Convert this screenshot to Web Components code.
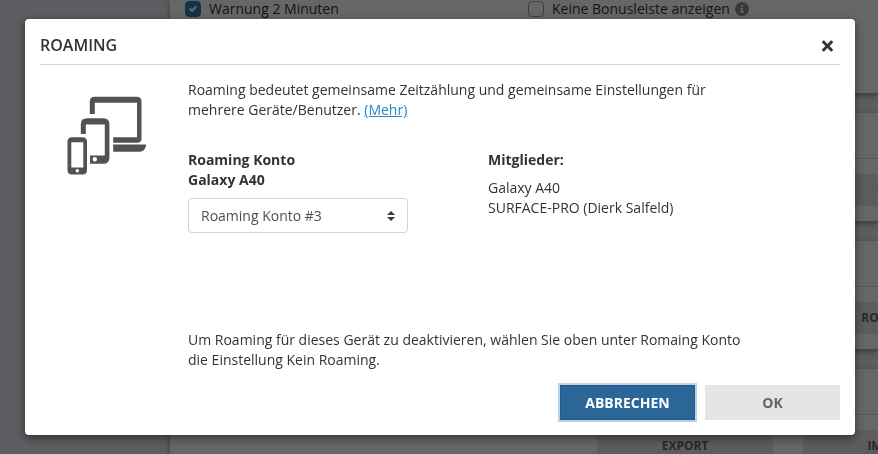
<!DOCTYPE html>
<html lang="de">
<head>
<meta charset="utf-8">
<meta name="viewport" content="width=device-width, initial-scale=1">
<title>Roaming</title>
<style>
	html {
		height: 100%;
		overflow: hidden;
	}

	body {
		margin: 0;
		height: 100%;
		overflow: hidden;
		background: #e6e8f0;
		color: #333;
		font: 14px/20px "Open Sans", "Noto Sans", sans-serif;
	}
</style>
</head>
<body>
<settings-page>
	<settings-card>
		<check-option checked>Warnung 2 Minuten</check-option>
		<check-option info>Keine Bonusleiste anzeigen</check-option>
	</settings-card>
	<settings-card>
		<action-button slot="actions">TEST</action-button>
	</settings-card>
	<settings-card>
		<action-button slot="actions">ROAMING</action-button>
	</settings-card>
	<settings-card>
		<action-button slot="actions">EXPORT</action-button>
		<action-button slot="actions">IMPORT</action-button>
	</settings-card>
</settings-page>

<modal-dialog heading="ROAMING">
	<devices-icon slot="icon"></devices-icon>
	<roaming-form></roaming-form>
	<action-button slot="footer" variant="primary">ABBRECHEN</action-button>
	<action-button slot="footer" variant="muted">OK</action-button>
</modal-dialog>

<script>
class BaseElement extends HTMLElement {
	constructor() {
		super();
		this.attachShadow({ mode: "open" });
	}

	connectedCallback() {
		const template = document.createElement("template");
		template.innerHTML = this.render();
		this.shadowRoot.appendChild(template.content.cloneNode(true));
	}
}

class SettingsPage extends BaseElement {
	render() {
		return `
      <style>
        :host {
          display: flex;
          flex-direction: column;
          gap: 20px;
          padding-left: 170px;
          /* the cards keep room for two columns of buttons */
          min-width: 824px;
        }
      </style>
      <slot></slot>
`;
	}
}

class SettingsCard extends BaseElement {
	render() {
		const actions = this.querySelector("[slot=actions]");

		return `
      <style>
        :host {
          display: block;
          background: #fff;
          box-shadow: 0 2px 6px rgba(0, 0, 0, 0.4);
        }

        .options {
          display: grid;
          grid-template-columns: 343px 1fr;
          padding: 0 15px 75px;
          min-height: 18px;
        }

        .head {
          height: 45px;
          border-bottom: 1px solid #d8d8d8;
        }

        .actions {
          display: flex;
          justify-content: flex-end;
          gap: 30px;
          padding: 15px;
        }
      </style>
      ${actions
				? `<div class="head"></div><div class="actions"><slot name="actions"></slot></div>`
				: `<div class="options"><slot></slot></div>`}
`;
	}
}

class CheckOption extends BaseElement {
	render() {
		const checked = this.hasAttribute("checked") ? "checked" : "";
		const info = `
      <svg class="info" viewBox="0 0 14 14" aria-hidden="true">
        <circle cx="7" cy="7" r="7" fill="#8c8c8c"/>
        <path d="M6 3h2v2H6zM5 6h3v3.500h1V11H5V9.500h1V7H5z" fill="#f0f0f0"/>
      </svg>`;

		return `
      <style>
        :host {
          display: flex;
          align-items: center;
          height: 18px;
        }

        label {
          display: grid;
          grid-template-columns: 16px auto;
          column-gap: 8px;
          align-items: center;
        }

        input,
        .tick {
          grid-area: 1 / 1;
        }

        input {
          appearance: none;
          box-sizing: border-box;
          width: 16px;
          height: 16px;
          margin: 0;
          border: 1px solid #999fa8;
          border-radius: 4px;
          background: #fff;
        }

        input:checked {
          border-color: #2f80bd;
          background: #2f80bd;
        }

        .tick {
          width: 8px;
          height: 8px;
          justify-self: center;
        }

        .info {
          width: 14px;
          height: 14px;
          margin-left: 5px;
        }
      </style>
      <label>
        <input type="checkbox" ${checked}>
        ${checked && `<svg class="tick" viewBox="0 0 8 8" aria-hidden="true"><path fill="#fff" d="M6.564.75l-3.590 3.612-1.538-1.550L0 4.260 2.974 7.250 8 2.193z"/></svg>`}
        <span><slot></slot></span>
      </label>
      ${this.hasAttribute("info") ? info : ""}
`;
	}
}

class ActionButton extends BaseElement {
	render() {
		return `
      <style>
        :host {
          display: block;
        }

        button {
          display: block;
          width: 176px;
          height: 32px;
          margin: 0;
          padding: 0;
          border: 0;
          background: #e5e5e5;
          color: #666;
          font: bold 12px/20px "Open Sans", "Noto Sans", sans-serif;
          cursor: pointer;
        }

        :host([variant]) button {
          width: 135px;
          height: 35px;
          font-size: 14px;
        }

        :host([variant="primary"]) button {
          border: 1px solid #245a8a;
          background: #2a6698;
          color: #fff;
          box-shadow: 0 0 0 2px #bfd3e6;
        }
      </style>
      <button type="button"><slot></slot></button>
`;
	}
}

class ModalDialog extends BaseElement {
	render() {
		return `
      <style>
        :host {
          position: fixed;
          inset: 0;
          display: flex;
          align-items: flex-start;
          padding: 19px 23px 19px 25px;
          background: rgba(0, 0, 0, 0.6);
        }

        .dialog {
          flex: 1;
          padding: 15px;
          border-radius: 4px;
          background: #fff;
          box-shadow: 0 3px 10px rgba(0, 0, 0, 0.5);
        }

        header {
          display: flex;
          align-items: center;
          justify-content: space-between;
          height: 30px;
          border-bottom: 1px solid #d4d4d4;
        }

        h1 {
          margin: 0 0 8px;
          font-size: 16px;
          line-height: 20px;
          font-weight: 600;
        }

        .close {
          display: flex;
          margin: 0 0 6px;
          padding: 0 7px;
          border: 0;
          background: none;
          color: #333;
          cursor: pointer;
        }

        .close svg {
          width: 11px;
          height: 16px;
        }

        .body {
          display: grid;
          grid-template-columns: 118px minmax(0, 570px);
          column-gap: 30px;
          padding: 15px 0;
        }

        footer {
          display: flex;
          justify-content: flex-end;
          gap: 10px;
        }
      </style>
      <div class="dialog" role="dialog" aria-modal="true" aria-labelledby="heading">
        <header>
          <h1 id="heading">${this.getAttribute("heading")}</h1>
          <button class="close" type="button" aria-label="Schließen">
            <svg viewBox="0 0 352 512" aria-hidden="true"><path fill="currentColor" d="M242.720 256l100.070-100.070c12.280-12.280 12.280-32.190 0-44.480l-22.240-22.240c-12.280-12.280-32.190-12.280-44.480 0L176 189.280 75.930 89.210c-12.280-12.280-32.190-12.280-44.480 0L9.210 111.450c-12.280 12.280-12.280 32.190 0 44.480L109.280 256 9.210 356.070c-12.280 12.280-12.280 32.190 0 44.480l22.240 22.240c12.280 12.280 32.200 12.280 44.480 0L176 322.720l100.070 100.070c12.280 12.280 32.200 12.280 44.480 0l22.240-22.240c12.280-12.280 12.280-32.190 0-44.480L242.720 256z"/></svg>
          </button>
        </header>
        <div class="body">
          <slot name="icon"></slot>
          <slot></slot>
        </div>
        <footer><slot name="footer"></slot></footer>
      </div>
`;
	}
}

class DevicesIcon extends BaseElement {
	render() {
		return `
      <style>
        :host {
          display: block;
          padding: 16px 12px 0 26px;
        }

        svg {
          display: block;
          width: 80px;
          height: 80px;
        }
      </style>
      <svg viewBox="66 96 80 80" fill="#505254" aria-hidden="true">
        <!-- laptop -->
        <path d="M89.800 114v-12.500q0-4.700 4.700-4.700h42.300q4.700 0 4.700 4.700v37q0 4.300-4.500 4.300h-23.800v-5.600h23.800v-34.500H94.800V114z"/>
        <path d="M113.200 144.600H146v1.400q-1.500 5.700-6 5.700h-26.800z"/>
        <!-- tablet -->
        <path fill-rule="evenodd" d="M80.800 134v-9.700q0-6 6-6h16.600q6 0 6 6v33.500q0 6-6 6H90v-8.300h14.800v-30.900H85.800V134zM97 159.300a2.200 2.200 0 1 0-4.400 0 2.200 2.200 0 1 0 4.400 0z"/>
        <!-- phone -->
        <path fill-rule="evenodd" d="M72 137.200h10.500q4.500 0 4.500 4.500V170q0 4.500-4.500 4.500H72q-4.500 0-4.500-4.500v-28.300q0-4.500 4.500-4.500zM71.300 142.200v25.200h12v-25.200zM79 170.800a1.700 1.700 0 1 0-3.400 0 1.700 1.700 0 1 0 3.400 0z"/>
      </svg>
`;
	}
}

class RoamingForm extends BaseElement {
	render() {
		return `
      <style>
        :host {
          display: block;
        }

        p {
          margin: 0;
        }

        a {
          color: #2a84c8;
          text-decoration: underline;
        }

        .columns {
          display: grid;
          grid-template-columns: 220px 1fr;
          column-gap: 80px;
          min-height: 180px;
          padding-top: 30px;
          box-sizing: border-box;
          margin-bottom: 30px;
        }

        label,
        h2 {
          display: block;
          margin: 0 0 8px;
          font-size: 14px;
          line-height: 20px;
          font-weight: bold;
        }

        ul {
          margin: 0;
          padding: 0;
          list-style: none;
        }

        .select {
          display: grid;
          align-items: center;
        }

        .select > * {
          grid-area: 1 / 1;
        }

        select {
          appearance: none;
          box-sizing: border-box;
          width: 100%;
          height: 35px;
          margin: 0;
          padding: 0 28px 0 12px;
          border: 1px solid #ced4da;
          border-radius: 4px;
          background: #fff;
          color: #495057;
          font: inherit;
        }

        .select svg {
          width: 8px;
          height: 10px;
          justify-self: end;
          margin-right: 13px;
          pointer-events: none;
        }
      </style>
      <p>Roaming bedeutet gemeinsame Zeitzählung und gemeinsame Einstellungen für mehrere Geräte/Benutzer. <a href="#mehr">(Mehr)</a></p>
      <div class="columns">
        <div>
          <label for="konto">Roaming Konto<br>Galaxy A40</label>
          <div class="select">
            <select id="konto">
              <option>Roaming Konto #3</option>
            </select>
            <svg viewBox="0 0 4 5" aria-hidden="true"><path fill="#343a40" d="M2 0L0 2h4zm0 5L0 3h4z"/></svg>
          </div>
        </div>
        <div>
          <h2>Mitglieder:</h2>
          <ul>
            <li>Galaxy A40</li>
            <li>SURFACE-PRO (Dierk Salfeld)</li>
          </ul>
        </div>
      </div>
      <p>Um Roaming für dieses Gerät zu deaktivieren, wählen Sie oben unter Romaing Konto die Einstellung Kein Roaming.</p>
`;
	}
}

customElements.define("settings-page", SettingsPage);
customElements.define("settings-card", SettingsCard);
customElements.define("check-option", CheckOption);
customElements.define("action-button", ActionButton);
customElements.define("modal-dialog", ModalDialog);
customElements.define("devices-icon", DevicesIcon);
customElements.define("roaming-form", RoamingForm);
</script>
</body>
</html>
